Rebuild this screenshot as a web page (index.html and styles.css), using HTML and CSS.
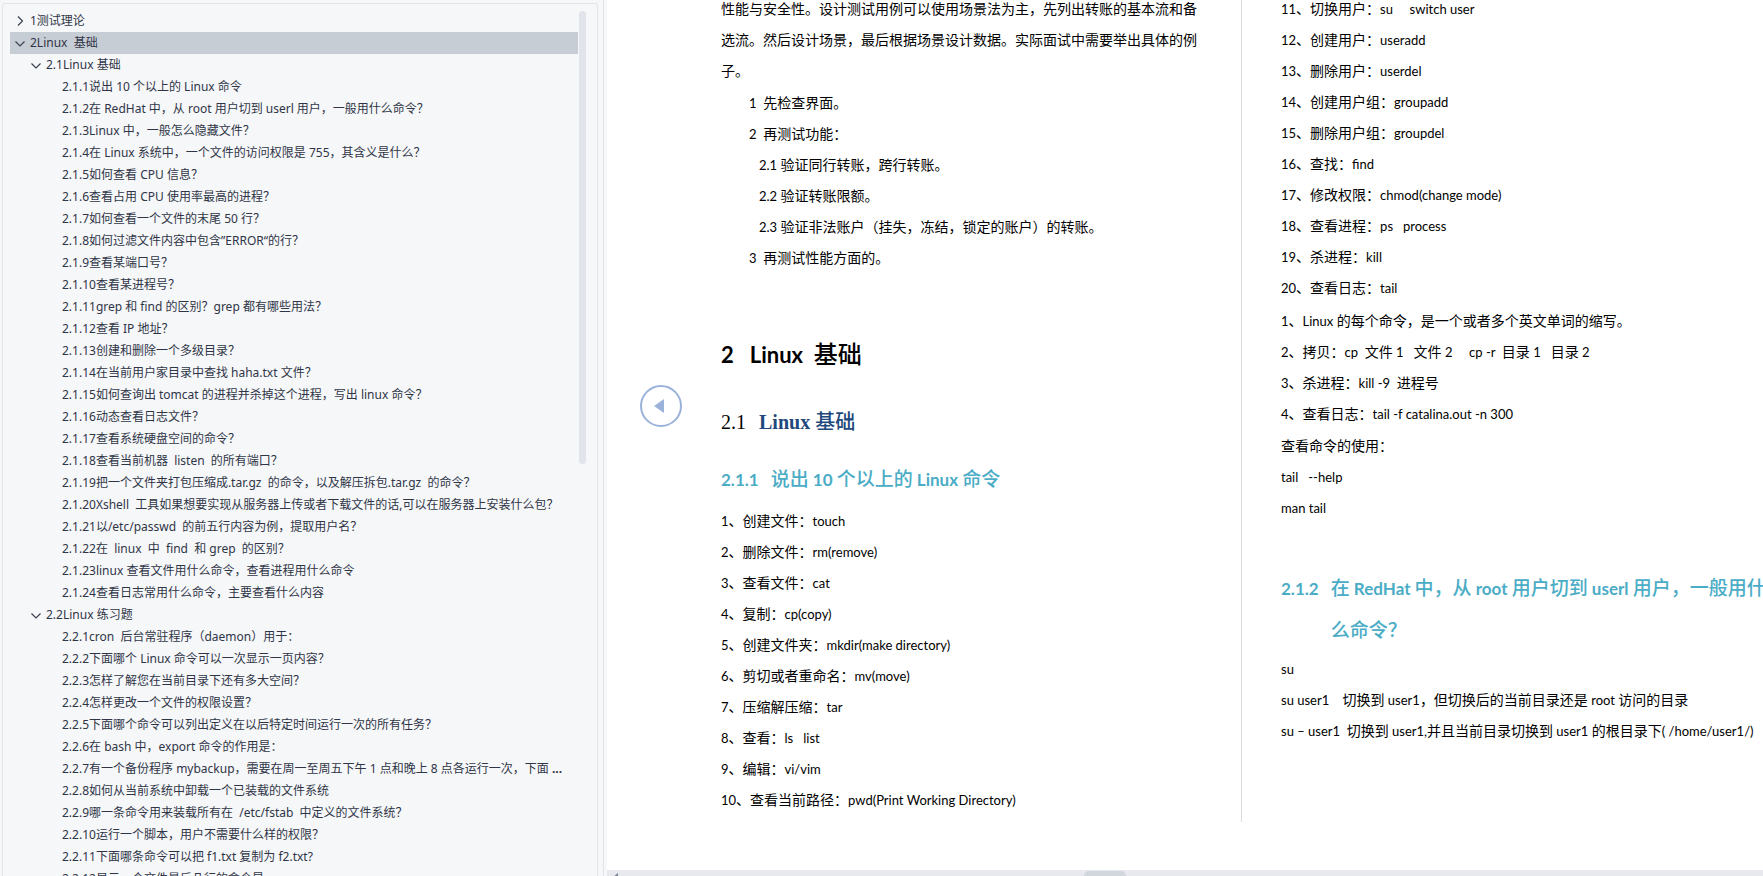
FILE: index.html
```html
<!DOCTYPE html>
<html lang="zh-CN">
<head>
<meta charset="utf-8">
<title>Linux 基础</title>
<link rel="stylesheet" href="styles.css">
</head>
<body>
<div class="app">
  <aside class="sidebar">
    <nav class="panel">
      <ul class="tree">
        <li class="row"><button class="toggle" aria-label="展开"><svg viewBox="0 0 12 12"><path d="M4 1.5 8.5 6 4 10.5"/></svg></button><a href="#">1测试理论</a></li>
        <li class="row selected"><button class="toggle" aria-label="收起"><svg viewBox="0 0 12 12"><path d="M1.5 4.500 6 9l4.500-4.500"/></svg></button><a href="#">2Linux  基础</a></li>
        <li class="row level-2"><button class="toggle" aria-label="收起"><svg viewBox="0 0 12 12"><path d="M1.500 4.500 6 9l4.500-4.500"/></svg></button><a href="#">2.1Linux 基础</a></li>
        <li class="row level-3"><a href="#">2.1.1说出 10 个以上的 Linux 命令</a></li>
        <li class="row level-3"><a href="#">2.1.2在 RedHat 中，从 root 用户切到 userl 用户，一般用什么命令？</a></li>
        <li class="row level-3"><a href="#">2.1.3Linux 中，一般怎么隐藏文件？</a></li>
        <li class="row level-3"><a href="#">2.1.4在 Linux 系统中，一个文件的访问权限是 755，其含义是什么？</a></li>
        <li class="row level-3"><a href="#">2.1.5如何查看 CPU 信息？</a></li>
        <li class="row level-3"><a href="#">2.1.6查看占用 CPU 使用率最高的进程？</a></li>
        <li class="row level-3"><a href="#">2.1.7如何查看一个文件的末尾 50 行？</a></li>
        <li class="row level-3"><a href="#">2.1.8如何过滤文件内容中包含”ERROR“的行？</a></li>
        <li class="row level-3"><a href="#">2.1.9查看某端口号？</a></li>
        <li class="row level-3"><a href="#">2.1.10查看某进程号？</a></li>
        <li class="row level-3"><a href="#">2.1.11grep 和 find 的区别？grep 都有哪些用法？</a></li>
        <li class="row level-3"><a href="#">2.1.12查看 IP 地址？</a></li>
        <li class="row level-3"><a href="#">2.1.13创建和删除一个多级目录？</a></li>
        <li class="row level-3"><a href="#">2.1.14在当前用户家目录中查找 haha.txt 文件？</a></li>
        <li class="row level-3"><a href="#">2.1.15如何查询出 tomcat 的进程并杀掉这个进程，写出 linux 命令？</a></li>
        <li class="row level-3"><a href="#">2.1.16动态查看日志文件？</a></li>
        <li class="row level-3"><a href="#">2.1.17查看系统硬盘空间的命令？</a></li>
        <li class="row level-3"><a href="#">2.1.18查看当前机器  listen  的所有端口？</a></li>
        <li class="row level-3"><a href="#">2.1.19把一个文件夹打包压缩成.tar.gz  的命令，以及解压拆包.tar.gz  的命令？</a></li>
        <li class="row level-3"><a href="#">2.1.20Xshell  工具如果想要实现从服务器上传或者下载文件的话,可以在服务器上安装什么包？</a></li>
        <li class="row level-3"><a href="#">2.1.21以/etc/passwd  的前五行内容为例，提取用户名？</a></li>
        <li class="row level-3"><a href="#">2.1.22在  linux  中  find  和 grep  的区别？</a></li>
        <li class="row level-3"><a href="#">2.1.23linux 查看文件用什么命令，查看进程用什么命令</a></li>
        <li class="row level-3"><a href="#">2.1.24查看日志常用什么命令，主要查看什么内容</a></li>
        <li class="row level-2"><button class="toggle" aria-label="收起"><svg viewBox="0 0 12 12"><path d="M1.500 4.500 6 9l4.500-4.500"/></svg></button><a href="#">2.2Linux 练习题</a></li>
        <li class="row level-3"><a href="#">2.2.1cron  后台常驻程序（daemon）用于：</a></li>
        <li class="row level-3"><a href="#">2.2.2下面哪个 Linux 命令可以一次显示一页内容？</a></li>
        <li class="row level-3"><a href="#">2.2.3怎样了解您在当前目录下还有多大空间？</a></li>
        <li class="row level-3"><a href="#">2.2.4怎样更改一个文件的权限设置？</a></li>
        <li class="row level-3"><a href="#">2.2.5下面哪个命令可以列出定义在以后特定时间运行一次的所有任务？</a></li>
        <li class="row level-3"><a href="#">2.2.6在 bash 中，export 命令的作用是：</a></li>
        <li class="row level-3"><a href="#">2.2.7有一个备份程序 mybackup，需要在周一至周五下午 1 点和晚上 8 点各运行一次，下面 <b>...</b></a></li>
        <li class="row level-3"><a href="#">2.2.8如何从当前系统中卸载一个已装载的文件系统</a></li>
        <li class="row level-3"><a href="#">2.2.9哪一条命令用来装载所有在  /etc/fstab  中定义的文件系统？</a></li>
        <li class="row level-3"><a href="#">2.2.10运行一个脚本，用户不需要什么样的权限？</a></li>
        <li class="row level-3"><a href="#">2.2.11下面哪条命令可以把 f1.txt 复制为 f2.txt?</a></li>
        <li class="row level-3"><a href="#">2.2.12显示一个文件最后几行的命令是</a></li>
      </ul>
      <div class="scrollbar"></div>
    </nav>
  </aside>

  <main class="viewer">
    <div class="pages">
      <button class="prev" aria-label="上一页"><svg viewBox="0 0 42 42"><circle cx="21" cy="21" r="20"/><path d="M14 21 24 14v14z"/></svg></button>

      <article class="page">
        <p>性能与安全性。设计测试用例可以使用场景法为主，先列出转账的基本流和备<br>选流。然后设计场景，最后根据场景设计数据。实际面试中需要举出具体的例<br>子。</p>
        <ul class="lines steps">
          <li><span class="en">1  </span>先检查界面。</li>
          <li><span class="en">2  </span>再测试功能：</li>
          <li class="sub"><span class="en">2.1 </span>验证同行转账，跨行转账。</li>
          <li class="sub"><span class="en">2.2 </span>验证转账限额。</li>
          <li class="sub"><span class="en">2.3 </span>验证非法账户（挂失，冻结，锁定的账户）的转账。</li>
          <li><span class="en">3  </span>再测试性能方面的。</li>
        </ul>
        <h1><span class="en">2</span><span><span class="en">Linux  </span>基础</span></h1>
        <h2><span class="num">2.1</span><span><span class="serif">Linux </span>基础</span></h2>
        <h3><span class="en">2.1.1</span><span>说出<span class="en"> 10 </span>个以上的<span class="en"> Linux </span>命令</span></h3>
        <ul class="lines commands">
          <li><span class="en">1</span>、创建文件：<span class="en">touch</span></li>
          <li><span class="en">2</span>、删除文件：<span class="en">rm(remove)</span></li>
          <li><span class="en">3</span>、查看文件：<span class="en">cat</span></li>
          <li><span class="en">4</span>、复制：<span class="en">cp(copy)</span></li>
          <li><span class="en">5</span>、创建文件夹：<span class="en">mkdir(make directory)</span></li>
          <li><span class="en">6</span>、剪切或者重命名：<span class="en">mv(move)</span></li>
          <li><span class="en">7</span>、压缩解压缩：<span class="en">tar</span></li>
          <li><span class="en">8</span>、查看：<span class="en">ls   list</span></li>
          <li><span class="en">9</span>、编辑：<span class="en">vi/vim</span></li>
          <li><span class="en">10</span>、查看当前路径：<span class="en">pwd(Print Working Directory)</span></li>
        </ul>
      </article>

      <article class="page next">
        <ul class="lines">
          <li><span class="en">11</span>、切换用户：<span class="en">su     switch user</span></li>
          <li><span class="en">12</span>、创建用户：<span class="en">useradd</span></li>
          <li><span class="en">13</span>、删除用户：<span class="en">userdel</span></li>
          <li><span class="en">14</span>、创建用户组：<span class="en">groupadd</span></li>
          <li><span class="en">15</span>、删除用户组：<span class="en">groupdel</span></li>
          <li><span class="en">16</span>、查找：<span class="en">find</span></li>
          <li><span class="en">17</span>、修改权限：<span class="en">chmod(change mode)</span></li>
          <li><span class="en">18</span>、查看进程：<span class="en">ps   process</span></li>
          <li><span class="en">19</span>、杀进程：<span class="en">kill</span></li>
          <li><span class="en">20</span>、查看日志：<span class="en">tail</span></li>
        </ul>
        <ul class="lines notes">
          <li><span class="en">1</span>、<span class="en">Linux </span>的每个命令，是一个或者多个英文单词的缩写。</li>
          <li><span class="en">2</span>、拷贝：<span class="en">cp  </span>文件<span class="en"> 1   </span>文件<span class="en"> 2     cp -r  </span>目录<span class="en"> 1   </span>目录<span class="en"> 2</span></li>
          <li><span class="en">3</span>、杀进程：<span class="en">kill -9  </span>进程号</li>
          <li><span class="en">4</span>、查看日志：<span class="en">tail -f catalina.out -n 300</span></li>
        </ul>
        <ul class="lines usage">
          <li>查看命令的使用：</li>
          <li><span class="en">tail   --help</span></li>
          <li><span class="en">man tail</span></li>
        </ul>
        <h3 class="question"><span class="en">2.1.2</span><span>在<span class="en"> RedHat </span>中，从<span class="en"> root </span>用户切到<span class="en"> userl </span>用户，一般用什<br>么命令？</span></h3>
        <ul class="lines answer">
          <li><span class="en">su</span></li>
          <li><span class="en">su user1    </span>切换到<span class="en"> user1</span>，但切换后的当前目录还是<span class="en"> root </span>访问的目录</li>
          <li><span class="en">su – user1  </span>切换到<span class="en"> user1,</span>并且当前目录切换到<span class="en"> user1 </span>的根目录下<span class="en">( /home/user1/)</span></li>
        </ul>
      </article>
    </div>
    <div class="hscroll"><svg class="arrow" viewBox="0 0 6 8"><path d="M5 0v8L0 4z"/></svg><div class="thumb"></div></div>
  </main>
</div>
</body>
</html>
```
FILE: styles.css
```css
* { box-sizing: border-box; }

body {
  margin: 0;
  background: #f6f7f9;
  font-family: "Noto Sans", "Noto Sans CJK SC", sans-serif;
}

ul, p, h1, h2, h3 { margin: 0; padding: 0; }
ul { list-style: none; }

.app {
  display: flex;
  height: 100vh;
  overflow: hidden;
}

/* outline tree */
.sidebar {
  flex: 0 0 604px;
  padding: 3px 5px 0 2px;
  border-right: 1px solid #e2e4ea;
}

.panel {
  display: flex;
  height: 100%;
  padding: 6px 11px 0 7px;
  border: 1px solid #e2e4e9;
  border-bottom: 0;
  border-radius: 3px 3px 0 0;
}

.tree { flex: 1; min-width: 0; }

.row {
  display: flex;
  align-items: center;
  gap: 4px;
  height: 22px;
  padding-left: 4px;
  color: #2f3547;
  font-size: 12px;
  line-height: 20px;
  white-space: pre;
}

.row a { color: inherit; text-decoration: none; }
.level-2 { padding-left: 20px; }
.level-3 { padding-left: 52px; }

.selected { background: #c7cdd5; }

.toggle {
  width: 12px;
  height: 12px;
  padding: 0;
  border: 0;
  background: none;
}

.toggle svg { display: block; fill: none; stroke: #3a4050; stroke-width: 1.2; }

.scrollbar {
  width: 7px;
  height: 453px;
  margin-top: 1px;
  margin-left: 1px;
  border-radius: 4px;
  background: #e1e4ea;
}

/* document */
.viewer {
  display: flex;
  flex: 1;
  flex-direction: column;
  min-width: 0;
  margin-left: 3px;
  background: #fff;
}

.pages {
  position: relative;
  display: grid;
  flex: 1;
  grid-template-columns: minmax(0, 634fr) minmax(0, 522fr);
  align-items: start;
  min-height: 0;
  overflow: hidden;
}

.page {
  margin-top: -7px;
  padding-left: 114px;
  color: #000;
  font-family: "Noto Sans CJK SC", sans-serif;
  font-size: 14px;
  font-weight: 400;
  line-height: 31px;
  white-space: nowrap;
}

.next {
  padding-bottom: 76px;
  padding-left: 39px;
  border-left: 1px solid #dcdcde;
}

.lines li { height: 31px; white-space: pre; }

.en {
  font-family: Lato, sans-serif;
  font-size: 13px;
  font-weight: 400;
  line-height: 1;
  white-space: pre;
}

.steps { margin-top: 1px; padding-left: 28px; }
.steps .sub { padding-left: 10px; }
.commands { margin-top: 6px; }
.notes { margin-top: 2px; }
.usage { margin-top: 1px; }
.answer { margin-top: 3px; }

h1, h2, h3 {
  display: flex;
  align-items: baseline;
  font-weight: 500;
}

h1 {
  gap: 16px;
  margin-top: 58px;
  font-size: 24px;
  line-height: 44px;
}

h1 .en { font-size: 22px; font-weight: 700; }

h2 {
  gap: 8px;
  margin-top: 26px;
  color: #1f497d;
  font-size: 20px;
  line-height: 40px;
}

.num {
  min-width: 30px;
  color: #000;
  font-family: "Liberation Serif", serif;
  font-weight: 400;
  line-height: 1;
}

.serif {
  font-family: "Liberation Serif", serif;
  font-weight: 700;
  line-height: 1;
  white-space: pre;
}

h3 {
  gap: 12px;
  margin-top: 16px;
  color: #4bacc6;
  font-size: 19px;
  line-height: 42px;
}

h3 .en { font-size: 17px; font-weight: 700; }
.question { margin-top: 43px; }

.prev {
  position: absolute;
  top: 385px;
  left: 33px;
  width: 42px;
  height: 42px;
  padding: 0;
  border: 0;
  background: none;
}

.prev svg { display: block; }
.prev circle { fill: #fff; stroke: #9bb3da; stroke-width: 2; }
.prev path { fill: #9bb3da; }

.hscroll {
  display: flex;
  flex: none;
  height: 6px;
  padding-top: 1px;
  padding-left: 6px;
  overflow: hidden;
  background: #e8e9ee;
}

.arrow { width: 6px; height: 8px; margin-top: 2px; fill: #7d8594; }

.thumb {
  width: 42px;
  height: 10px;
  margin-left: 40.4%;
  border-radius: 5px;
  background: #d2d6dd;
}
```
